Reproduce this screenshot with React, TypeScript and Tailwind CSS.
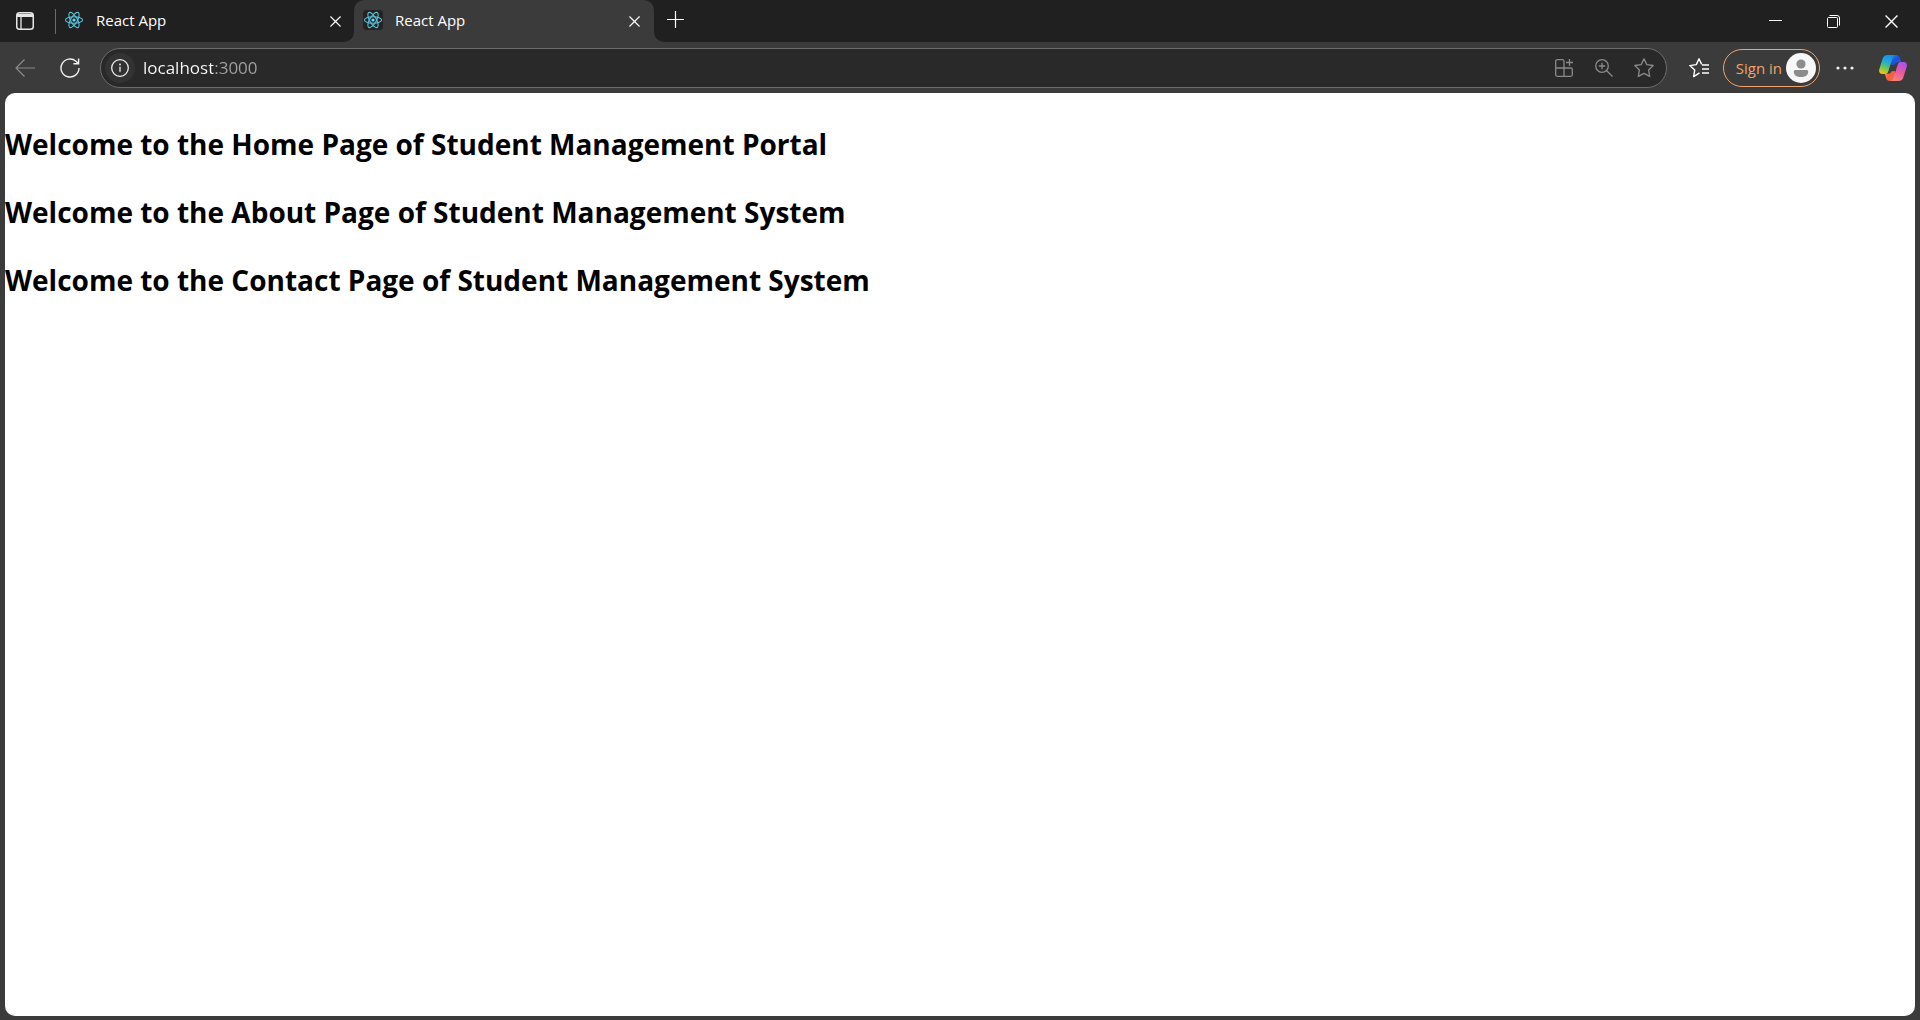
import React from "react";

const headings = [
  "Welcome to the Home Page of Student Management Portal",
  "Welcome to the About Page of Student Management System",
  "Welcome to the Contact Page of Student Management System",
];

function ReactLogo() {
  return (
    <svg viewBox="0 0 20 20" className="size-5" fill="none" stroke="#58c4dc" strokeWidth="1.1" aria-hidden="true">
      <ellipse cx="10" cy="10" rx="8.6" ry="3.3" />
      <ellipse cx="10" cy="10" rx="8.6" ry="3.3" transform="rotate(60 10 10)" />
      <ellipse cx="10" cy="10" rx="8.6" ry="3.3" transform="rotate(120 10 10)" />
      <circle cx="10" cy="10" r="1.6" fill="#61dafb" stroke="none" />
    </svg>
  );
}

function CloseGlyph({ size }: { size: number }) {
  return (
    <svg viewBox="0 0 12 12" width={size} height={size} stroke="currentColor" strokeWidth="1.3" aria-hidden="true">
      <path d="M.5.5l11 11M11.5.5l-11 11" />
    </svg>
  );
}

function Tab({ title, active }: { title: string; active?: boolean }) {
  return (
    <div className={active ? "flex h-full w-75 items-center rounded-t-[10px] bg-[#3b3b3b] pr-2 pl-[9px]" : "flex h-full w-[298px] items-center pr-[7px] pl-2"}>
      <button type="button" role="tab" aria-selected={!!active} className="flex min-w-0 flex-1 items-center gap-3 pb-0.5 text-left text-[15px] leading-5 text-white">
        <span className={active ? "rounded-sm bg-[#232323]" : "rounded-sm"}>
          <ReactLogo />
        </span>
        <span className="truncate">{title}</span>
      </button>
      <button type="button" aria-label={"Close " + title} className="grid size-6 place-items-center text-white">
        <CloseGlyph size={11} />
      </button>
    </div>
  );
}

function IconButton({ label, className, children }: { label: string; className: string; children: React.ReactNode }) {
  return (
    <button type="button" aria-label={label} className={"grid shrink-0 place-items-center " + className}>
      {children}
    </button>
  );
}

function CopilotLogo() {
  return (
    <svg viewBox="0 0 28 26" className="h-[26px] w-7" aria-hidden="true">
      <defs>
        <linearGradient id="cpLeft" x1="0.6" y1="0" x2="0.3" y2="1">
          <stop offset="0" stopColor="#1690e8" />
          <stop offset="0.35" stopColor="#22a8d8" />
          <stop offset="0.65" stopColor="#5cc46a" />
          <stop offset="1" stopColor="#f2c60f" />
        </linearGradient>
        <linearGradient id="cpTop" x1="0" y1="0" x2="1" y2="1">
          <stop offset="0" stopColor="#2390f0" />
          <stop offset="0.5" stopColor="#1b4fd8" />
          <stop offset="1" stopColor="#2a62e8" />
        </linearGradient>
        <linearGradient id="cpRight" x1="0.7" y1="0" x2="0.3" y2="1">
          <stop offset="0" stopColor="#a653f0" />
          <stop offset="0.5" stopColor="#e85aa0" />
          <stop offset="1" stopColor="#fb8273" />
        </linearGradient>
        <linearGradient id="cpBottom" x1="0" y1="0" x2="1" y2="0.6">
          <stop offset="0" stopColor="#f5a03c" />
          <stop offset="0.5" stopColor="#f0603c" />
          <stop offset="1" stopColor="#f06a50" />
        </linearGradient>
      </defs>
      <path d="M11 0h6.200c2 0 3 1 3.600 2.700L22.200 7.200h-3.600c-1.600 0-2.600.9-3.100 2.500L12 10z" fill="url(#cpTop)" />
      <path d="M17 26h-6.200c-2 0-3-1-3.600-2.700L5.800 18.800h3.600c1.600 0 2.600-.9 3.100-2.500L16 16z" fill="url(#cpBottom)" />
      <path d="M8.600 0h8C14.800 0 14 1.300 13.400 3.200l-3.900 12.600C8.900 17.900 8 19 6 19H3.400C.6 19-.4 17 .3 14.300L3.600 3.800C4.500 1.100 6 0 8.600 0z" fill="url(#cpLeft)" />
      <path d="M19.400 26h-8c1.800 0 2.600-1.300 3.200-3.200l3.900-12.600C19.100 8.100 20 7 22 7h2.600c2.800 0 3.800 2 3.100 4.700l-3.300 10.500c-.9 2.700-2.400 3.800-5 3.800z" fill="url(#cpRight)" />
    </svg>
  );
}

export default function App() {
  return (
    <div className="flex h-screen flex-col bg-[#3b3b3b] font-['Open_Sans',sans-serif]">
      <header className="flex h-[42px] shrink-0">
        <div className="flex items-center rounded-br-[10px] bg-[#202020]">
          <IconButton label="Tab actions" className="ml-2 h-8 w-[34px] text-[#e6e6e6]">
            <svg viewBox="0 0 18 18" className="size-[18px]" fill="none" stroke="currentColor" aria-hidden="true">
              <rect x=".75" y=".75" width="16.500" height="16.500" rx="2.800" strokeWidth="1.500" />
              <path d="M1 1.800h16V5H1z" fill="currentColor" stroke="none" />
              <path d="M5 5v12" strokeWidth="1.300" />
            </svg>
          </IconButton>
          <span className="ml-[13px] h-[25px] w-px bg-[#6b6b6b]" />
          <Tab title="React App" />
        </div>
        <div className="bg-[#202020]">
          <Tab title="React App" active />
        </div>
        <div className="flex flex-1 items-center justify-between rounded-bl-[10px] bg-[#202020]">
          <IconButton label="New tab" className="ml-[3px] size-9 pb-1 text-white">
            <svg viewBox="0 0 17 17" className="size-[17px]" stroke="currentColor" strokeWidth="1.200" aria-hidden="true">
              <path d="M8.500 0v17M0 8.500h17" />
            </svg>
          </IconButton>
          <div className="flex h-full">
            <IconButton label="Minimize" className="h-full w-[58px] text-white">
              <svg viewBox="0 0 13 13" className="size-[13px]" stroke="currentColor" aria-hidden="true">
                <path d="M0 5.500h13" />
              </svg>
            </IconButton>
            <IconButton label="Restore" className="h-full w-[58px] text-white">
              <svg viewBox="0 0 13 13" className="size-[13px]" fill="none" stroke="currentColor" aria-hidden="true">
                <rect x=".5" y="2.500" width="10" height="10" rx="1" />
                <path d="M2.500.5h7.500a2.500 2.500 0 0 1 2.500 2.500v7.500" />
              </svg>
            </IconButton>
            <IconButton label="Close" className="h-full w-[58px] text-white">
              <CloseGlyph size={13} />
            </IconButton>
          </div>
        </div>
      </header>

      <nav className="flex h-[51px] shrink-0 items-center pr-[13px]">
        <IconButton label="Back" className="ml-2 h-8 w-[34px] text-[#8a8a8a]">
          <svg viewBox="0 0 20 18" className="h-[18px] w-5" fill="none" stroke="currentColor" strokeWidth="1.200" aria-hidden="true">
            <path d="M20 9H1M9.500.5L1 9l8.500 8.500" />
          </svg>
        </IconButton>
        <IconButton label="Refresh" className="ml-[11px] h-8 w-[34px] text-[#f0f0f0]">
          <svg viewBox="0 0 20 20" className="size-5" fill="none" stroke="currentColor" strokeWidth="1.400" aria-hidden="true">
            <path d="M19 10a9 9 0 1 1-3-6.700L18.300 5.500M18.600.5v5.200h-5.200" />
          </svg>
        </IconButton>
        <div className="ml-[13px] flex h-10 min-w-0 flex-1 items-center rounded-full border border-[#6c6c6c] bg-[#292929] pr-0.5 pl-1">
          <IconButton label="View site information" className="size-[30px] rounded-full bg-[#333333] text-[#f0f0f0]">
            <svg viewBox="0 0 18 18" className="size-[18px]" fill="none" stroke="currentColor" strokeWidth="1.300" aria-hidden="true">
              <circle cx="9" cy="9" r="8.300" />
              <path d="M9 7.800v5" />
              <circle cx="9" cy="5.500" r=".9" fill="currentColor" stroke="none" />
            </svg>
          </IconButton>
          <input
            type="text"
            aria-label="Address and search bar"
            defaultValue="localhost:3000"
            className="ml-2 h-8 min-w-0 flex-1 bg-[linear-gradient(to_right,#ffffff_70px,#a3a3a3_70px)] bg-clip-text text-[17px] leading-6 text-transparent caret-white outline-none"
          />
          <div className="flex items-center text-[#8a8a8a]">
            <IconButton label="App available" className="h-8 w-10">
              <svg viewBox="0 0 18 18" className="size-[18px]" fill="none" stroke="currentColor" strokeWidth="1.300" aria-hidden="true">
                <path d="M9 9V2.200C9 1.300 8.500.7 7.500.7H2.200C1.300.7.700 1.300.700 2.200v13.600c0 .9.600 1.500 1.500 1.500h13.600c.9 0 1.500-.6 1.500-1.500v-5.300c0-1-.6-1.500-1.500-1.500H.7M9 9v8.300M14.500 0v7M11 3.500h7" />
              </svg>
            </IconButton>
            <IconButton label="Zoom" className="h-8 w-10">
              <svg viewBox="0 0 18 18" className="size-[18px]" fill="none" stroke="currentColor" strokeWidth="1.300" aria-hidden="true">
                <circle cx="7" cy="7" r="6.300" />
                <path d="M11.500 11.500l6 6M7 3.800v6.400M3.800 7h6.400" />
              </svg>
            </IconButton>
            <IconButton label="Add to favorites" className="h-8 w-10">
              <svg viewBox="0 0 20 20" className="size-5" fill="none" stroke="currentColor" strokeWidth="1.300" strokeLinejoin="round" aria-hidden="true">
                <path d="M10 .8l2.800 5.800 6.400.9-4.600 4.500 1.100 6.400L10 15.400l-5.700 3 1.100-6.400L.8 7.500l6.400-.9z" />
              </svg>
            </IconButton>
          </div>
        </div>
        <IconButton label="Favorites" className="ml-4 h-8 w-8 text-white">
          <svg viewBox="0 0 20 20" className="size-5" fill="none" stroke="currentColor" strokeWidth="1.400" strokeLinejoin="round" aria-hidden="true">
            <path d="M10.500 14.900L4.700 18.600l1-6.500L.8 7.600l6.500-1L10 .8l2.700 5.600M13 7h7M13 11h7M13 15h7" />
          </svg>
        </IconButton>
        <button type="button" className="ml-2 flex h-[38px] shrink-0 items-center gap-1 rounded-full border border-[#f0a36c] pr-[3px] pl-3 text-[15px] leading-5 text-[#f0a36c]">
          Sign in
          <svg viewBox="0 0 30 30" className="size-[30px]" aria-hidden="true">
            <circle cx="15" cy="15" r="15" fill="#f7f7f7" />
            <circle cx="15" cy="11" r="4.600" fill="#8c8c8c" />
            <path d="M9.500 17h11c1 0 1.700.7 1.700 1.700 0 3.300-3 5.300-7.200 5.300s-7.200-2-7.200-5.300c0-1 .7-1.700 1.700-1.700z" fill="#8c8c8c" />
          </svg>
        </button>
        <IconButton label="Settings and more" className="ml-2 h-8 w-[34px] text-[#eeeeee]">
          <svg viewBox="0 0 18 4" className="h-1 w-[18px]" fill="currentColor" aria-hidden="true">
            <circle cx="2" cy="2" r="1.600" />
            <circle cx="9" cy="2" r="1.600" />
            <circle cx="16" cy="2" r="1.600" />
          </svg>
        </IconButton>
        <IconButton label="Copilot" className="ml-[17px] h-8 w-7">
          <CopilotLogo />
        </IconButton>
      </nav>

      <main className="mx-[5px] mb-1 flex min-h-0 flex-1 flex-col gap-7 overflow-auto rounded-[10px] bg-white pt-[31px]">
        {headings.map((text) => (
          <h1 key={text} className="text-[28px] leading-10 font-bold text-black">
            {text}
          </h1>
        ))}
      </main>
    </div>
  );
}
